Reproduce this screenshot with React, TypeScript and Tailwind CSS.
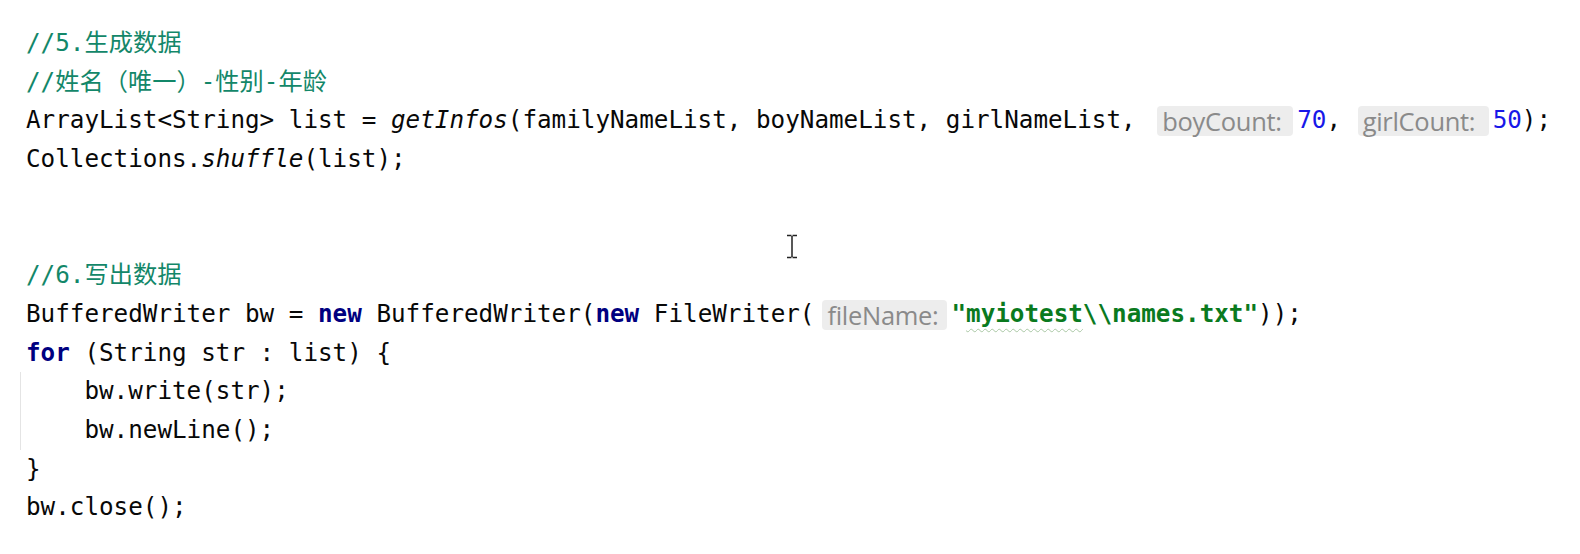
import React from "react"

const mono = { fontFamily: '"DejaVu Sans Mono", "Noto Sans CJK SC", monospace' }

function Hint({ label, w, ml, mr }: { label: string; w: string; ml: string; mr: string }) {
  return (
    <span
      className={`inline-block h-[30px] align-middle rounded-[4px] bg-[#ededed] pl-[5px] text-[25.5px] leading-[30px] tracking-[-0.3px] text-[#8a8a8a] ${w} ${ml} ${mr}`}
      style={{ fontFamily: '"Open Sans", "Noto Sans", sans-serif' }}
    >
      {label}
    </span>
  )
}

const Kw = ({ children }: { children: React.ReactNode }) => (
  <span className="font-bold text-[#000080]">{children}</span>
)
const Num = ({ children }: { children: React.ReactNode }) => (
  <span className="text-[#1818e8]">{children}</span>
)
const Cm = ({ children }: { children: React.ReactNode }) => (
  <span className="text-[#138769]">{children}</span>
)

export default function App() {
  return (
    <div className="relative h-[554px] w-[1580px] overflow-hidden bg-white">
      <div
        className="whitespace-pre pl-[26px] pt-[24px] text-[24.25px] leading-[38.7px] text-[#080808]"
        style={mono}
      >
        <div><Cm>//5.生成数据</Cm></div>
        <div><Cm>//姓名（唯一）-性别-年龄</Cm></div>
        <div>
          ArrayList&lt;String&gt; list = <i>getInfos</i>(familyNameList, boyNameList, girlNameList,{" "}
          <Hint label="boyCount:" w="w-[136px]" ml="ml-[7px]" mr="mr-[4px]" />
          <Num>70</Num>,{" "}
          <Hint label="girlCount:" w="w-[131px]" ml="ml-[2px]" mr="mr-[4px]" />
          <Num>50</Num>);
        </div>
        <div>Collections.<i>shuffle</i>(list);</div>
        <div>{" "}</div>
        <div>{" "}</div>
        <div><Cm>//6.写出数据</Cm></div>
        <div>
          BufferedWriter bw = <Kw>new</Kw> BufferedWriter(<Kw>new</Kw> FileWriter(
          <Hint label="fileName:" w="w-[125px]" ml="ml-[8px]" mr="mr-[4px]" />
          <span className="font-bold text-[#0a7a1e]">
            "
            <span className="underline decoration-wavy decoration-[#a9c7a4] decoration-1 underline-offset-[6px]">
              myiotest
            </span>
            \\names.txt"
          </span>
          ));
        </div>
        <div><Kw>for</Kw> (String str : list) {"{"}</div>
        <div className="-ml-[6px] border-l border-[#e4e4e4] pl-[5px]">
          <div>    bw.write(str);</div>
          <div>    bw.newLine();</div>
        </div>
        <div>{"}"}</div>
        <div>bw.close();</div>
      </div>

      {/* text cursor */}
      <svg className="absolute left-[785px] top-[234px]" width="14" height="25" viewBox="0 0 14 25">
        <path d="M2 1.5h4.5M7.5 1.5H12M7 2v21M2 23.5h4.5M7.5 23.5H12" stroke="#222" strokeWidth="1.5" fill="none" />
      </svg>
    </div>
  )
}
